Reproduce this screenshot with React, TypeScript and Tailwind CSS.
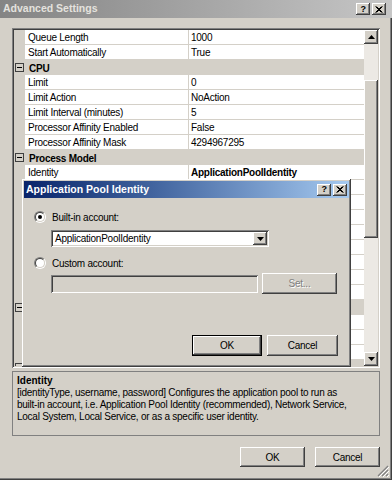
import React from 'react';

const raised =
  'shadow-[inset_-1px_-1px_0_#404040,inset_1px_1px_0_#ffffff,inset_-2px_-2px_0_#808080,inset_2px_2px_0_#d4d0c8]';
const sunken =
  'shadow-[inset_1px_1px_0_#808080,inset_-1px_-1px_0_#ffffff,inset_2px_2px_0_#404040,inset_-2px_-2px_0_#d4d0c8]';
const raisedSmall = 'shadow-[inset_-1px_-1px_0_#404040,inset_1px_1px_0_#ffffff,inset_-2px_-2px_0_#808080]';

type Row = { name: string; value?: string; bold?: boolean; category?: boolean };

// rows below "Identity" sit under the pool identity dialog, so they carry no text
const rows: Row[] = [
  { name: 'Queue Length', value: '1000' },
  { name: 'Start Automatically', value: 'True' },
  { name: 'CPU', category: true },
  { name: 'Limit', value: '0' },
  { name: 'Limit Action', value: 'NoAction' },
  { name: 'Limit Interval (minutes)', value: '5' },
  { name: 'Processor Affinity Enabled', value: 'False' },
  { name: 'Processor Affinity Mask', value: '4294967295' },
  { name: 'Process Model', category: true },
  { name: 'Identity', value: 'ApplicationPoolIdentity', bold: true },
  { name: '' },
  { name: '' },
  { name: '' },
  { name: '' },
  { name: '' },
  { name: '' },
  { name: '' },
  { name: '' },
  { name: '', category: true },
  { name: '' },
  { name: '' },
  { name: '' },
  { name: '', category: true },
];

function MinusBox() {
  return (
    <svg width="9" height="9" viewBox="0 0 9 9">
      <rect x="0.5" y="0.5" width="8" height="8" fill="none" stroke="#404040" />
      <path d="M2 4.5h5" stroke="#000" />
    </svg>
  );
}

function GridRow({ row }: { row: Row }) {
  if (row.category) {
    return (
      <div className="flex h-[15px] shrink-0 items-center bg-[#d4d0c8]">
        <div className="flex w-[11px] shrink-0 justify-center">
          <MinusBox />
        </div>
        <span className="pl-[4px] pt-px font-bold">{row.name}</span>
      </div>
    );
  }
  return (
    <div className="flex h-[15px] shrink-0">
      <div className="w-[11px] shrink-0 bg-[#d4d0c8]" />
      <div className="w-[163px] shrink-0 overflow-hidden whitespace-nowrap border-b border-[#d4d0c8] bg-white pl-[3px] leading-[15px] tracking-[-0.25px]">
        {row.name}
      </div>
      <div className="w-px shrink-0 bg-[#d4d0c8]" />
      <div
        className={`flex-1 overflow-hidden whitespace-nowrap border-b border-[#d4d0c8] bg-white pl-[2px] leading-[15px] ${
          row.bold ? 'font-bold' : 'tracking-[-0.25px]'
        }`}
      >
        {row.value}
      </div>
    </div>
  );
}

function Arrow({ down }: { down?: boolean }) {
  return (
    <svg width="7" height="4" viewBox="0 0 7 4">
      <path d={down ? 'M0 0h7L3.5 4z' : 'M0 4h7L3.5 0z'} fill="#000" />
    </svg>
  );
}

function TitleButton({ children }: { children: React.ReactNode }) {
  return (
    <div className={`flex h-[12px] w-[14px] items-center justify-center bg-[#d4d0c8] ${raisedSmall}`}>{children}</div>
  );
}

function CloseGlyph() {
  return (
    <svg width="8" height="7" viewBox="0 0 8 7">
      <path d="M0.5 0.5l6 6M6.5 0.5l-6 6M1.5 0.5l6 6M7.5 0.5l-6 6" stroke="#000" strokeWidth="1" />
    </svg>
  );
}

function Radio({ checked }: { checked?: boolean }) {
  return (
    <span className="flex h-[12px] w-[12px] shrink-0 rounded-full border border-t-[#808080] border-r-white border-b-white border-l-[#808080]">
      <span className="flex h-full w-full items-center justify-center rounded-full border border-t-[#404040] border-r-[#d4d0c8] border-b-[#d4d0c8] border-l-[#404040] bg-white">
        {checked && <span className="h-[4px] w-[4px] rounded-full bg-black" />}
      </span>
    </span>
  );
}

function PoolIdentityDialog() {
  return (
    <div className={`absolute left-[22px] top-[179px] h-[188px] w-[329px] bg-[#d4d0c8] p-[2px] ${raised}`}>
      <div className="flex h-[17px] items-center bg-linear-to-r from-[#0a246a] to-[#a6caf0] px-[2px]">
        <span className="text-[10.5px] font-bold tracking-normal text-white">Application Pool Identity</span>
        <div className="ml-auto flex gap-[2px]">
          <TitleButton>
            <span className="text-[9px] font-bold leading-none">?</span>
          </TitleButton>
          <TitleButton>
            <CloseGlyph />
          </TitleButton>
        </div>
      </div>

      <div className="pl-[10px] pr-[11px]">
        <div className="mt-[13px] flex h-[12px] items-center gap-[6px]">
          <Radio checked />
          <span>Built-in account:</span>
        </div>
        <div className={`ml-[17px] mt-[7px] flex h-[17px] w-[218px] items-center bg-white pl-[4px] pr-[2px] ${sunken}`}>
          <span className="flex-1">ApplicationPoolIdentity</span>
          <div className={`flex h-[13px] w-[14px] items-center justify-center bg-[#d4d0c8] ${raised}`}>
            <Arrow down />
          </div>
        </div>

        <div className="mt-[10px] flex h-[12px] items-center gap-[6px]">
          <Radio />
          <span>Custom account:</span>
        </div>
        <div className="ml-[17px] mt-[4px] flex items-center gap-[4px]">
          <div className={`h-[18px] w-[207px] bg-[#d4d0c8] ${sunken}`} />
          <div className={`flex h-[21px] w-[75px] items-center justify-center bg-[#d4d0c8] text-[#808080] [text-shadow:1px_1px_0_#ffffff] ${raised}`}>
            Set...
          </div>
        </div>

        <div className="mt-[41px] flex justify-end gap-[5px]">
          <div className="h-[21px] w-[70px] border border-black">
            <div className={`flex h-full w-full items-center justify-center bg-[#d4d0c8] ${raised}`}>OK</div>
          </div>
          <div className={`flex h-[21px] w-[71px] items-center justify-center bg-[#d4d0c8] ${raised}`}>Cancel</div>
        </div>
      </div>
    </div>
  );
}

export default function App() {
  return (
    <div className="relative h-[480px] w-[392px] overflow-hidden bg-[#d4d0c8] font-['Liberation_Sans',Arial,sans-serif] text-[10px] tracking-[-0.25px] text-black shadow-[inset_-1px_-1px_0_#404040,inset_-2px_-2px_0_#808080]">
      {/* title bar */}
      <div className="flex h-[18px] items-center bg-linear-to-r from-[#848484] to-[#c6c6c6] pl-[3px] pr-[6px]">
        <span className="text-[10.5px] font-bold tracking-normal text-[#e4e2de]">Advanced Settings</span>
        <div className="ml-auto flex gap-[2px]">
          <TitleButton>
            <span className="text-[9px] font-bold leading-none">?</span>
          </TitleButton>
          <TitleButton>
            <CloseGlyph />
          </TitleButton>
        </div>
      </div>

      {/* property grid */}
      <div className={`ml-[12px] mt-[10px] flex h-[340px] w-[368px] bg-white p-[2px] ${sunken}`}>
        <div className="flex flex-1 flex-col overflow-hidden">
          {rows.map((row, i) => (
            <GridRow key={i} row={row} />
          ))}
        </div>
        <div className="flex w-[14px] flex-col bg-[#ece9e4]">
          <div className={`flex h-[14px] items-center justify-center bg-[#d4d0c8] ${raised}`}>
            <Arrow />
          </div>
          <div className="h-[36px]" />
          <div className={`h-[158px] bg-[#d4d0c8] ${raised}`} />
          <div className="flex-1" />
          <div className={`flex h-[14px] items-center justify-center bg-[#d4d0c8] ${raised}`}>
            <Arrow down />
          </div>
        </div>
      </div>

      {/* description */}
      <div className="ml-[12px] mt-[3px] h-[65px] w-[368px] border border-[#808080] px-[4px] pt-[3px] leading-[12px]">
        <div className="font-bold tracking-normal">Identity</div>
        <div className="whitespace-nowrap">
          [identityType, username, password] Configures the application pool to run as
          <br />
          built-in account, i.e. Application Pool Identity (recommended), Network Service,
          <br />
          Local System, Local Service, or as a specific user identity.
        </div>
      </div>

      {/* buttons */}
      <div className="mt-[11px] flex justify-end gap-[10px] pr-[12px]">
        <div className={`flex h-[20px] w-[65px] items-center justify-center bg-[#d4d0c8] ${raised}`}>OK</div>
        <div className={`flex h-[20px] w-[65px] items-center justify-center bg-[#d4d0c8] ${raised}`}>Cancel</div>
      </div>

      {/* size grip */}
      <svg className="absolute bottom-[3px] right-[3px]" width="12" height="12" viewBox="0 0 12 12">
        <path d="M11 1L1 11M11 5L5 11M11 9L9 11" stroke="#808080" strokeWidth="1.2" />
        <path d="M12 2L2 12M12 6L6 12M12 10L10 12" stroke="#ffffff" strokeWidth="1" />
      </svg>

      <PoolIdentityDialog />
    </div>
  );
}
